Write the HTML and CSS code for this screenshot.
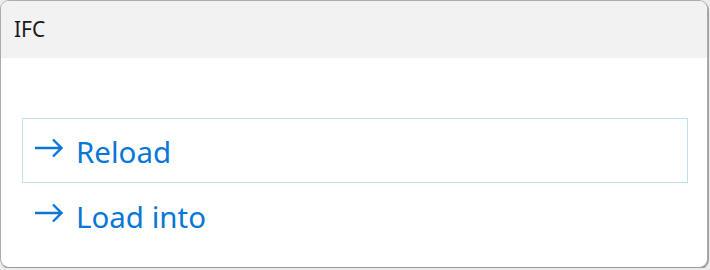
FILE: index.html
```html
<!DOCTYPE html>
<html lang="en">
<head>
    <meta charset="UTF-8">
    <meta name="viewport" content="width=device-width, initial-scale=1.0">
    <title>IFC</title>
    <link rel="stylesheet" href="styles.css">
</head>
<body>
    <div class="window">
        <div class="title-bar">IFC</div>
        <div class="content">
            <ul class="actions">
                <li class="action focused">
                    <svg class="arrow" width="28" height="20" viewBox="0 0 28 20">
                        <path d="M0 10 H26.5 M18 1.5 L26.5 10 L18 18.5" fill="none" stroke="currentColor" stroke-width="2.4"/>
                    </svg>
                    <span>Reload</span>
                </li>
                <li class="action">
                    <svg class="arrow" width="28" height="20" viewBox="0 0 28 20">
                        <path d="M0 10 H26.5 M18 1.5 L26.5 10 L18 18.5" fill="none" stroke="currentColor" stroke-width="2.4"/>
                    </svg>
                    <span>Load into</span>
                </li>
            </ul>
        </div>
    </div>
</body>
</html>
```

FILE: styles.css
```css
body {
    font-family: "Noto Sans", "Open Sans", sans-serif;
    background-color: #ececec;
    margin: 0px;
    padding: 0px;
}
.window {
    width: 706px;
    height: 266px;
    background-color: #fff;
    border: 1px solid #ababab;
    border-bottom-color: #9a9a9a;
    border-radius: 9px;
    box-shadow: 1px 1px 0 #a0a0a0;
    overflow: hidden;
}
.title-bar {
    height: 57px;
    background-color: #f2f2f2;
    color: #1a1a1a;
    font-size: 21px;
    line-height: 57px;
    padding-left: 13px;
}
.content {
    padding: 60px 19px 0 21px;
}
.actions {
    list-style: none;
    margin: 0;
    padding: 0;
}
.action {
    display: flex;
    align-items: center;
    height: 63px;
    border: 1px solid transparent;
    padding-left: 12px;
    color: #0877d7;
    font-size: 29.5px;
}
.action.focused {
    border-color: #bfe0f5;
}
.action span {
    margin-left: 13px;
    padding-top: 1px;
}
.arrow {
    flex-shrink: 0;
    margin-top: -6px;
}
```
